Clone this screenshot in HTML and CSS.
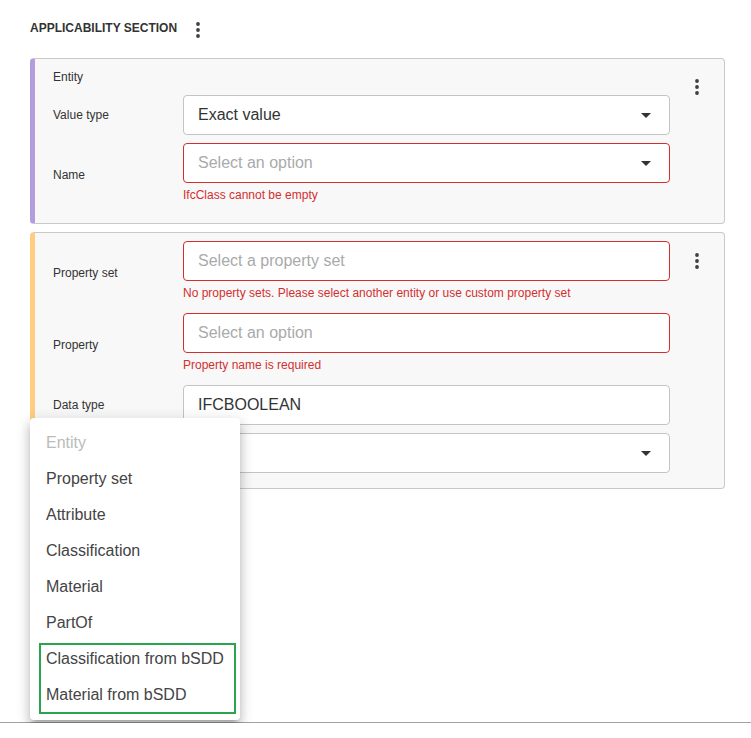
FILE: index.html
```html
<!DOCTYPE html>
<html lang="en">
<head>
    <meta charset="UTF-8">
    <meta name="viewport" content="width=device-width, initial-scale=1.0">
    <title>Applicability Section</title>
    <link rel="stylesheet" href="styles.css">
</head>
<body>
    <div class="page">
        <div class="section-header">
            <span class="section-title">APPLICABILITY SECTION</span>
            <svg class="kebab" width="4" height="16" viewBox="0 0 4 16"><circle cx="2" cy="2" r="1.9"/><circle cx="2" cy="8" r="1.9"/><circle cx="2" cy="14" r="1.9"/></svg>
        </div>

        <div class="card card-entity">
            <div class="card-body">
                <div class="row">
                    <div class="label">Entity</div>
                </div>
                <div class="row">
                    <div class="label">Value type</div>
                    <div class="field">
                        <div class="select"><span class="value">Exact value</span><i class="caret"></i></div>
                    </div>
                </div>
                <div class="row">
                    <div class="label">Name</div>
                    <div class="field">
                        <div class="select error"><span class="placeholder">Select an option</span><i class="caret"></i></div>
                        <div class="helper">IfcClass cannot be empty</div>
                    </div>
                </div>
            </div>
            <div class="card-actions">
                <svg class="kebab" width="4" height="16" viewBox="0 0 4 16"><circle cx="2" cy="2" r="1.9"/><circle cx="2" cy="8" r="1.9"/><circle cx="2" cy="14" r="1.9"/></svg>
            </div>
        </div>

        <div class="card card-property">
            <div class="card-body">
                <div class="row">
                    <div class="label">Property set</div>
                    <div class="field">
                        <div class="select error"><span class="placeholder">Select a property set</span></div>
                        <div class="helper">No property sets. Please select another entity or use custom property set</div>
                    </div>
                </div>
                <div class="row">
                    <div class="label">Property</div>
                    <div class="field">
                        <div class="select error"><span class="placeholder">Select an option</span></div>
                        <div class="helper">Property name is required</div>
                    </div>
                </div>
                <div class="row">
                    <div class="label">Data type</div>
                    <div class="field">
                        <div class="select"><span class="value">IFCBOOLEAN</span></div>
                    </div>
                </div>
                <div class="row">
                    <div class="label"></div>
                    <div class="field">
                        <div class="select"><span class="value"></span><i class="caret"></i></div>
                    </div>
                </div>
            </div>
            <div class="card-actions">
                <svg class="kebab" width="4" height="16" viewBox="0 0 4 16"><circle cx="2" cy="2" r="1.9"/><circle cx="2" cy="8" r="1.9"/><circle cx="2" cy="14" r="1.9"/></svg>
            </div>
        </div>

        <ul class="menu">
            <li class="disabled">Entity</li>
            <li>Property set</li>
            <li>Attribute</li>
            <li>Classification</li>
            <li>Material</li>
            <li>PartOf</li>
            <li>Classification from bSDD</li>
            <li>Material from bSDD</li>
            <div class="highlight"></div>
        </ul>
    </div>
</body>
</html>
```

FILE: styles.css
```css
body {
    margin: 0;
    font-family: "Liberation Sans", Arial, sans-serif;
    background-color: white;
    color: #333;
}

.page {
    position: relative;
    box-sizing: border-box;
    height: 723px;
    padding: 18px 26px 0 30px;
    border-bottom: 1px solid #a3a3a3;
}

.section-header {
    display: flex;
    align-items: center;
    height: 20px;
    margin-bottom: 20px;
}

.section-title {
    font-size: 12px;
    font-weight: bold;
    color: #333;
}

.kebab {
    display: block;
    fill: #3c3f44;
}

.section-header .kebab {
    margin-left: 19px;
    margin-top: 3px;
}

.card {
    display: flex;
    background-color: #f8f8f8;
    border: 1px solid #c9c9c9;
    border-left-width: 5px;
    border-radius: 4px;
    margin-bottom: 8px;
}

.card-entity {
    border-left-color: #b39ddb;
}

.card-entity .card-body {
    padding-bottom: 16px;
}

.card-property {
    border-left-color: #ffcc80;
}

.card-body {
    flex: 1;
    display: flex;
    flex-direction: column;
    gap: 8px;
    padding: 8px 0 15px 18px;
}

.card-actions {
    width: 54px;
    display: flex;
    justify-content: center;
    padding-top: 8px;
}

.card-actions .kebab {
    margin-top: 12px;
}

.row {
    display: grid;
    grid-template-columns: 130px 1fr;
    align-items: center;
    min-height: 20px;
}

.label {
    font-size: 12px;
    color: #333;
}

.select {
    display: flex;
    align-items: center;
    box-sizing: border-box;
    height: 40px;
    padding: 0 14px 0 14px;
    background-color: white;
    border: 1px solid #c4c4c4;
    border-radius: 4px;
    font-size: 16px;
}

.select.error {
    border-color: #d32f2f;
}

.value {
    flex: 1;
    color: #333;
}

.placeholder {
    flex: 1;
    color: #aaa;
}

.caret {
    width: 0;
    height: 0;
    margin-right: 4px;
    border-left: 5px solid transparent;
    border-right: 5px solid transparent;
    border-top: 5px solid #333;
}

.helper {
    margin: 4px 0;
    font-size: 12px;
    line-height: 16px;
    color: #d32f2f;
}

.menu {
    position: absolute;
    left: 30px;
    top: 418px;
    width: 210px;
    margin: 0;
    padding: 7px 0;
    list-style: none;
    background-color: white;
    border-radius: 4px;
    box-shadow: 0 5px 5px -3px rgba(0,0,0,0.2), 0 8px 10px 1px rgba(0,0,0,0.14), 0 3px 14px 2px rgba(0,0,0,0.12);
}

.menu li {
    height: 36px;
    line-height: 36px;
    padding-left: 16px;
    font-size: 16px;
    color: #444;
}

.menu li.disabled {
    color: #bbb;
}

.highlight {
    position: absolute;
    left: 9px;
    top: 225px;
    width: 197px;
    height: 71px;
    box-sizing: border-box;
    border: 2px solid #2aa54d;
}
```
